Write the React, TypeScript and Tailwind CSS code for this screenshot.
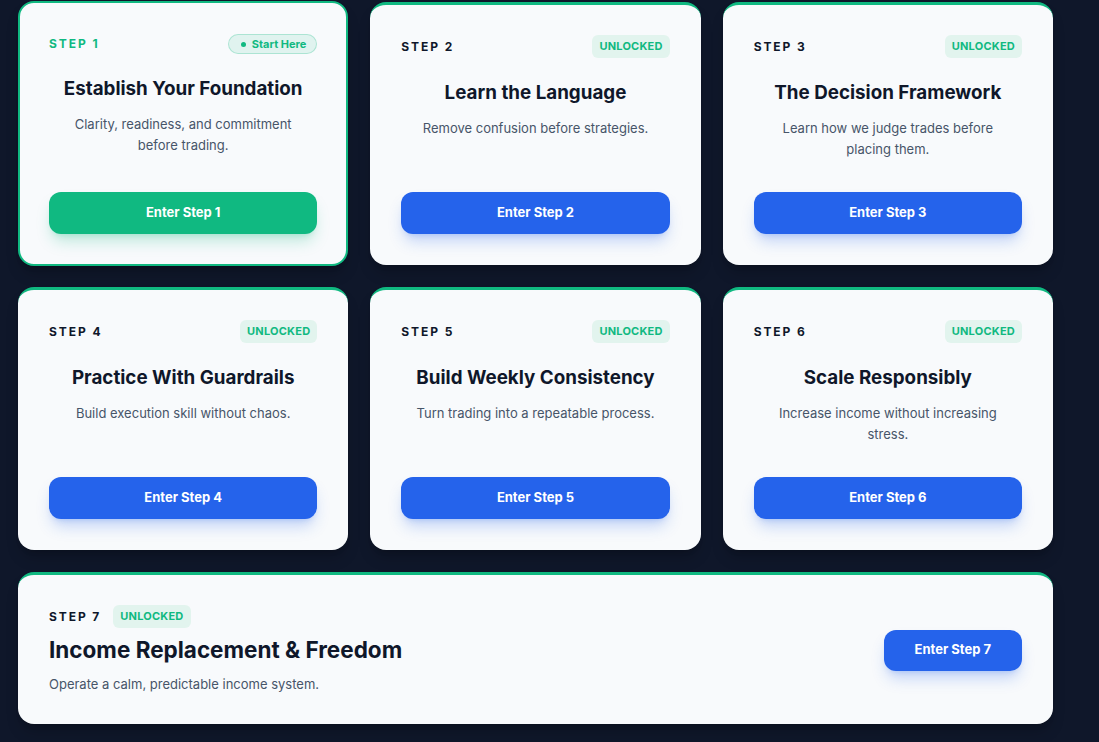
import React from "react";

type Step = { n: number; title: string; desc: string; first?: boolean };

const steps: Step[] = [
  { n: 1, title: "Establish Your Foundation", desc: "Clarity, readiness, and commitment before trading.", first: true },
  { n: 2, title: "Learn the Language", desc: "Remove confusion before strategies." },
  { n: 3, title: "The Decision Framework", desc: "Learn how we judge trades before placing them." },
  { n: 4, title: "Practice With Guardrails", desc: "Build execution skill without chaos." },
  { n: 5, title: "Build Weekly Consistency", desc: "Turn trading into a repeatable process." },
  { n: 6, title: "Scale Responsibly", desc: "Increase income without increasing stress." },
];

function Unlocked() {
  return (
    <span className="inline-flex h-[23px] items-center rounded-md bg-[#e2f4ee] px-[7px] text-[11px] font-bold tracking-[0.02em] text-[#10b981]">
      UNLOCKED
    </span>
  );
}

function Card({ s }: { s: Step }) {
  const base =
    "flex flex-col rounded-2xl bg-[#f8fafc] shadow-lg shadow-black/20";
  const cls = s.first
    ? base + " -my-px border-2 border-[#10b981] px-[29px] pt-[31px] pb-[30px] shadow-[0_0_18px_rgba(16,185,129,0.18)]"
    : base + " border-t-[3px] border-[#10b981] pt-[30px] pb-[31px] px-[31px]";
  return (
    <div className={cls}>
      <div className="flex items-center justify-between">
        <span
          className={
            "text-[12px] font-bold tracking-[0.16em] " +
            (s.first ? "text-[#10b981]" : "text-[#0f172a]")
          }
        >
          STEP {s.n}
        </span>
        {s.first ? (
          <span className="inline-flex h-[20px] items-center gap-[6px] rounded-full border border-[#10b981]/25 bg-[#10b981]/10 pl-[12px] pr-[10px] text-[11px] font-bold text-[#10b981]">
            <span className="h-[5px] w-[5px] rounded-full bg-[#10b981]" />
            Start Here
          </span>
        ) : (
          <Unlocked />
        )}
      </div>
      <h3 className="mt-[21px] text-center text-[18.8px] font-bold leading-[28px] text-[#0f172a]">
        {s.title}
      </h3>
      <p className="mx-auto mt-[11px] max-w-[240px] text-center text-[13px] leading-[21px] text-[#475569]">
        {s.desc}
      </p>
      <div className="mt-auto pt-8">
        <button
          className={
            "h-[42px] w-full rounded-xl text-[13px] font-bold text-white " +
            (s.first
              ? "bg-[#10b981] shadow-lg shadow-[#10b981]/25"
              : "bg-[#2563eb] shadow-lg shadow-[#2563eb]/25")
          }
        >
          Enter Step {s.n}
        </button>
      </div>
    </div>
  );
}

export default function App() {
  return (
    <div
      className="min-h-screen bg-[#0f172a] pl-[18px] pt-[2px]"
      style={{ fontFamily: "Inter, 'Noto Sans', sans-serif" }}
    >
      <div className="w-[1035px]">
        <div className="grid grid-cols-3 gap-x-[22px] gap-y-[22px]">
          {steps.map((s) => (
            <Card key={s.n} s={s} />
          ))}
        </div>
        <div className="mt-[22px] flex items-center justify-between rounded-2xl border-t-[3px] border-[#10b981] bg-[#f8fafc] px-[31px] pt-[30px] pb-[29px] shadow-lg shadow-black/20">
          <div>
            <div className="flex items-center gap-3">
              <span className="text-[12px] font-bold tracking-[0.16em] text-[#0f172a]">STEP 7</span>
              <Unlocked />
            </div>
            <h3 className="mt-[8px] text-[22.5px] font-bold leading-[28px] text-[#0f172a]">
              Income Replacement &amp; Freedom
            </h3>
            <p className="mt-[10px] text-[13px] leading-[21px] text-[#475569]">
              Operate a calm, predictable income system.
            </p>
          </div>
          <button className="h-[41px] rounded-xl bg-[#2563eb] px-[31px] text-[13px] font-bold text-white shadow-lg shadow-[#2563eb]/25">
            Enter Step 7
          </button>
        </div>
      </div>
    </div>
  );
}
